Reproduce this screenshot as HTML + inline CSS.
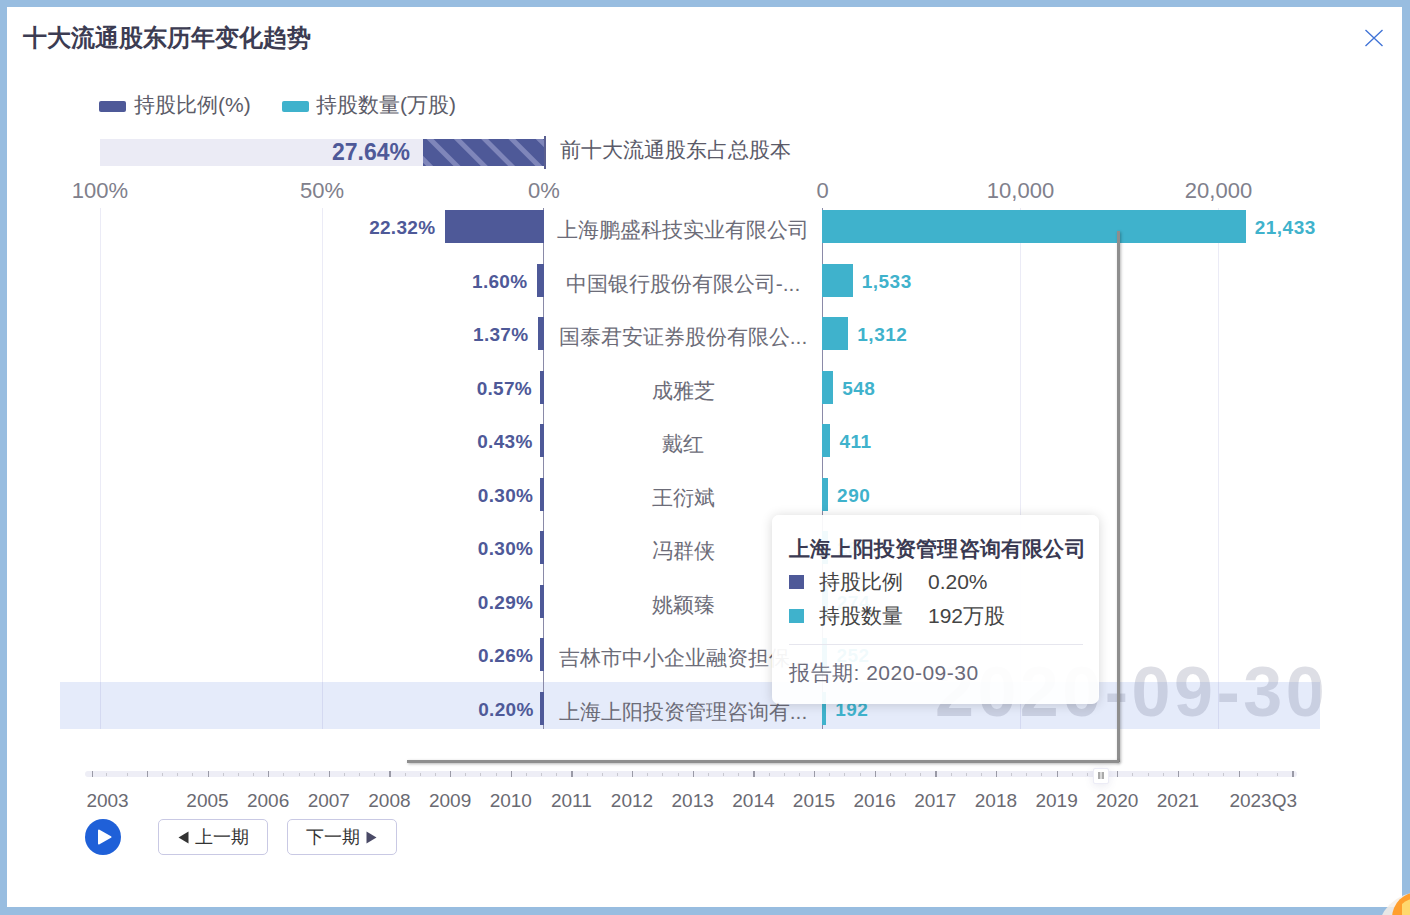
<!DOCTYPE html>
<html><head><meta charset="utf-8">
<style>
*{margin:0;padding:0;box-sizing:border-box}
html,body{width:1410px;height:915px;overflow:hidden;background:#98bde0;font-family:"Liberation Sans",sans-serif}
.a{position:absolute;white-space:nowrap}
#win{left:7px;top:7px;width:1395px;height:900px;background:#fff}
.title{left:23px;top:23px;font-size:24px;font-weight:bold;color:#3c3c52;line-height:30px}
.lg{font-size:21px;color:#5c5c68;line-height:24px}
.sw{height:11px;width:27px;border-radius:2px}
.pur{background:#4e5998}
.teal{background:#3fb2cc}
.ax{font-size:22px;color:#80808c;line-height:24px;text-align:center;width:120px}
.grid{width:1px;background:rgba(90,90,180,0.12)}
.pl{font-size:19px;font-weight:bold;color:#4e5998;line-height:22px;text-align:right;width:120px;letter-spacing:0.3px}
.tl{font-size:19px;font-weight:bold;color:#3fb2cc;line-height:22px;letter-spacing:0.5px}
.cat{font-size:21px;color:#6c6c78;line-height:26px;text-align:center;width:278px;left:544px}
.yr{font-size:19px;color:#6a6a72;line-height:22px;text-align:center;width:60px}
.tick{width:1px;background:#999}
.btn{border:1px solid #c9c9e4;border-radius:5px;height:36px;width:110px;background:#fff;font-size:18px;color:#333;line-height:34px}
</style></head><body>
<div class="a" id="win"></div>
<div class="a title">十大流通股东历年变化趋势</div>
<svg class="a" style="left:1364px;top:29px" width="20" height="18" viewBox="0 0 20 18"><path d="M1.5 1 L18.5 17 M18.5 1 L1.5 17" stroke="#3f72d6" stroke-width="1.35" fill="none"/></svg>

<div class="a sw pur" style="left:99px;top:101px"></div><div class="a lg" style="left:134px;top:93px">持股比例(%)</div>
<div class="a sw teal" style="left:282px;top:101px"></div><div class="a lg" style="left:316px;top:93px">持股数量(万股)</div>
<div class="a" style="left:100px;top:139px;width:445px;height:27px;background:#ebebf5"></div>
<svg class="a" style="left:423px;top:139px" width="122" height="27"><rect width="122" height="27" fill="#4e5998"/><polygon points="140.0,0 147.0,0 174.0,27 167.0,27" fill="#7f86ba"/><polygon points="112.7,0 119.7,0 146.7,27 139.7,27" fill="#7f86ba"/><polygon points="85.4,0 92.4,0 119.4,27 112.4,27" fill="#7f86ba"/><polygon points="58.1,0 65.1,0 92.1,27 85.1,27" fill="#7f86ba"/><polygon points="30.8,0 37.8,0 64.8,27 57.8,27" fill="#7f86ba"/><polygon points="3.5,0 10.5,0 37.5,27 30.5,27" fill="#7f86ba"/><polygon points="-23.8,0 -16.8,0 10.2,27 3.2,27" fill="#7f86ba"/></svg>
<div class="a" style="left:544px;top:136px;width:1.5px;height:33px;background:#5a5f90"></div>
<div class="a" style="left:290px;top:138px;width:120px;text-align:right;font-size:23px;font-weight:bold;color:#4e5998;line-height:28px">27.64%</div>
<div class="a" style="left:560px;top:137px;font-size:21px;color:#5a5a68;line-height:26px">前十大流通股东占总股本</div>
<div class="a ax" style="left:40px;top:179px">100%</div>
<div class="a ax" style="left:262px;top:179px">50%</div>
<div class="a ax" style="left:484px;top:179px">0%</div>
<div class="a ax" style="left:762.5px;top:179px">0</div>
<div class="a ax" style="left:960.5px;top:179px">10,000</div>
<div class="a ax" style="left:1158.5px;top:179px">20,000</div>
<div class="a" style="left:60px;top:682px;width:1260px;height:47px;background:#e5ebfa"></div>
<div class="a grid" style="left:100px;top:208px;height:521px"></div>
<div class="a grid" style="left:322px;top:208px;height:521px"></div>
<div class="a grid" style="left:1020px;top:208px;height:521px"></div>
<div class="a grid" style="left:1218px;top:208px;height:521px"></div>
<div class="a" style="left:935px;top:652px;font-size:70px;font-weight:bold;letter-spacing:3.5px;color:rgba(120,125,150,0.25);line-height:80px">2020-09-30</div>
<div class="a" style="left:543px;top:208px;width:1px;height:521px;background:#8a8aa8"></div>
<div class="a" style="left:822px;top:208px;width:1px;height:521px;background:#8a8aa8"></div>
<div class="a pur" style="left:444.9px;top:210.2px;width:99.1px;height:33px;"></div>
<div class="a pl" style="left:315.4px;top:217.2px">22.32%</div>
<div class="a teal" style="left:822.4px;top:210.2px;width:423.3px;height:33px;"></div>
<div class="a tl" style="left:1254.7px;top:217.2px">21,433</div>
<div class="a cat" style="top:217.2px">上海鹏盛科技实业有限公司</div>
<div class="a pur" style="left:536.9px;top:263.7px;width:7.1px;height:33px;"></div>
<div class="a pl" style="left:407.4px;top:270.7px">1.60%</div>
<div class="a teal" style="left:822.4px;top:263.7px;width:30.3px;height:33px;"></div>
<div class="a tl" style="left:861.7px;top:270.7px">1,533</div>
<div class="a cat" style="top:270.7px">中国银行股份有限公司-...</div>
<div class="a pur" style="left:537.9px;top:317.2px;width:6.1px;height:33px;"></div>
<div class="a pl" style="left:408.4px;top:324.2px">1.37%</div>
<div class="a teal" style="left:822.4px;top:317.2px;width:25.9px;height:33px;"></div>
<div class="a tl" style="left:857.3px;top:324.2px">1,312</div>
<div class="a cat" style="top:324.2px">国泰君安证券股份有限公...</div>
<div class="a pur" style="left:540.0px;top:370.7px;width:4.0px;height:33px;"></div>
<div class="a pl" style="left:412.0px;top:377.7px">0.57%</div>
<div class="a teal" style="left:822.4px;top:370.7px;width:10.8px;height:33px;"></div>
<div class="a tl" style="left:842.2px;top:377.7px">548</div>
<div class="a cat" style="top:377.7px">成雅芝</div>
<div class="a pur" style="left:540.0px;top:424.2px;width:4.0px;height:33px;"></div>
<div class="a pl" style="left:412.6px;top:431.2px">0.43%</div>
<div class="a teal" style="left:822.4px;top:424.2px;width:8.1px;height:33px;"></div>
<div class="a tl" style="left:839.5px;top:431.2px">411</div>
<div class="a cat" style="top:431.2px">戴红</div>
<div class="a pur" style="left:540.0px;top:477.7px;width:4.0px;height:33px;"></div>
<div class="a pl" style="left:413.2px;top:484.7px">0.30%</div>
<div class="a teal" style="left:822.4px;top:477.7px;width:5.7px;height:33px;"></div>
<div class="a tl" style="left:837.1px;top:484.7px">290</div>
<div class="a cat" style="top:484.7px">王衍斌</div>
<div class="a pur" style="left:540.0px;top:531.2px;width:4.0px;height:33px;"></div>
<div class="a pl" style="left:413.2px;top:538.2px">0.30%</div>
<div class="a teal" style="left:822.4px;top:531.2px;width:5.6px;height:33px;"></div>
<div class="a tl" style="left:837.0px;top:538.2px">285</div>
<div class="a cat" style="top:538.2px">冯群侠</div>
<div class="a pur" style="left:540.0px;top:584.7px;width:4.0px;height:33px;"></div>
<div class="a pl" style="left:413.2px;top:591.7px">0.29%</div>
<div class="a teal" style="left:822.4px;top:584.7px;width:5.4px;height:33px;"></div>
<div class="a tl" style="left:836.8px;top:591.7px">274</div>
<div class="a cat" style="top:591.7px">姚颖臻</div>
<div class="a pur" style="left:540.0px;top:638.2px;width:4.0px;height:33px;"></div>
<div class="a pl" style="left:413.3px;top:645.2px">0.26%</div>
<div class="a teal" style="left:822.4px;top:638.2px;width:5.0px;height:33px;"></div>
<div class="a tl" style="left:836.4px;top:645.2px">252</div>
<div class="a cat" style="top:645.2px">吉林市中小企业融资担保...</div>
<div class="a pur" style="left:540.0px;top:691.7px;width:4.0px;height:33px;"></div>
<div class="a pl" style="left:413.6px;top:698.7px">0.20%</div>
<div class="a teal" style="left:822.4px;top:691.7px;width:3.8px;height:33px;"></div>
<div class="a tl" style="left:835.2px;top:698.7px">192</div>
<div class="a cat" style="top:698.7px">上海上阳投资管理咨询有...</div>
<div class="a" style="left:1117px;top:231px;width:2.5px;height:531px;background:#8e8e8e;box-shadow:1px 1px 3px rgba(0,0,0,0.3)"></div>
<div class="a" style="left:407px;top:760px;width:712px;height:2.5px;background:#8e8e8e;box-shadow:1px 1px 3px rgba(0,0,0,0.3)"></div>
<div class="a" style="left:772px;top:515px;width:327px;height:189px;background:rgba(255,255,255,0.93);border-radius:7px;box-shadow:0 1px 12px rgba(0,0,0,0.16)"></div>
<div class="a" style="left:789px;top:536px;font-size:21px;font-weight:bold;letter-spacing:0.2px;color:#3a3a52;line-height:26px">上海上阳投资管理咨询有限公司</div>
<div class="a pur" style="left:789px;top:575px;width:15px;height:14px"></div>
<div class="a" style="left:819px;top:569px;font-size:21px;color:#444;line-height:26px">持股比例</div>
<div class="a" style="left:928px;top:569px;font-size:21px;color:#444;line-height:26px">0.20%</div>
<div class="a teal" style="left:789px;top:609px;width:15px;height:14px"></div>
<div class="a" style="left:819px;top:603px;font-size:21px;color:#444;line-height:26px">持股数量</div>
<div class="a" style="left:928px;top:603px;font-size:21px;color:#444;line-height:26px">192万股</div>
<div class="a" style="left:789px;top:644px;width:294px;height:1px;background:#e6e6ee"></div>
<div class="a" style="left:789px;top:660px;font-size:21px;letter-spacing:0.5px;color:#6a6a7a;line-height:26px">报告期: 2020-09-30</div>

<div class="a" style="left:85px;top:771px;width:1212px;height:6px;border-radius:3px;background:#eeeef6"></div>
<div class="a" style="left:92.0px;top:771px;width:1.3px;height:6px;background:#9a9aa6"></div>
<div class="a" style="left:106.4px;top:773px;width:1px;height:3px;background:#c8c8d0"></div>
<div class="a" style="left:126.6px;top:773px;width:1px;height:3px;background:#c8c8d0"></div>
<div class="a" style="left:146.5px;top:771px;width:1.3px;height:6px;background:#9a9aa6"></div>
<div class="a" style="left:161.8px;top:773px;width:1px;height:3px;background:#c8c8d0"></div>
<div class="a" style="left:177.0px;top:773px;width:1px;height:3px;background:#c8c8d0"></div>
<div class="a" style="left:192.2px;top:773px;width:1px;height:3px;background:#c8c8d0"></div>
<div class="a" style="left:207.5px;top:771px;width:1.3px;height:6px;background:#9a9aa6"></div>
<div class="a" style="left:222.7px;top:773px;width:1px;height:3px;background:#c8c8d0"></div>
<div class="a" style="left:237.8px;top:773px;width:1px;height:3px;background:#c8c8d0"></div>
<div class="a" style="left:253.0px;top:773px;width:1px;height:3px;background:#c8c8d0"></div>
<div class="a" style="left:268.1px;top:771px;width:1.3px;height:6px;background:#9a9aa6"></div>
<div class="a" style="left:283.3px;top:773px;width:1px;height:3px;background:#c8c8d0"></div>
<div class="a" style="left:298.5px;top:773px;width:1px;height:3px;background:#c8c8d0"></div>
<div class="a" style="left:313.6px;top:773px;width:1px;height:3px;background:#c8c8d0"></div>
<div class="a" style="left:328.8px;top:771px;width:1.3px;height:6px;background:#9a9aa6"></div>
<div class="a" style="left:344.0px;top:773px;width:1px;height:3px;background:#c8c8d0"></div>
<div class="a" style="left:359.1px;top:773px;width:1px;height:3px;background:#c8c8d0"></div>
<div class="a" style="left:374.3px;top:773px;width:1px;height:3px;background:#c8c8d0"></div>
<div class="a" style="left:389.4px;top:771px;width:1.3px;height:6px;background:#9a9aa6"></div>
<div class="a" style="left:404.6px;top:773px;width:1px;height:3px;background:#c8c8d0"></div>
<div class="a" style="left:419.8px;top:773px;width:1px;height:3px;background:#c8c8d0"></div>
<div class="a" style="left:434.9px;top:773px;width:1px;height:3px;background:#c8c8d0"></div>
<div class="a" style="left:450.1px;top:771px;width:1.3px;height:6px;background:#9a9aa6"></div>
<div class="a" style="left:465.3px;top:773px;width:1px;height:3px;background:#c8c8d0"></div>
<div class="a" style="left:480.4px;top:773px;width:1px;height:3px;background:#c8c8d0"></div>
<div class="a" style="left:495.6px;top:773px;width:1px;height:3px;background:#c8c8d0"></div>
<div class="a" style="left:510.8px;top:771px;width:1.3px;height:6px;background:#9a9aa6"></div>
<div class="a" style="left:525.9px;top:773px;width:1px;height:3px;background:#c8c8d0"></div>
<div class="a" style="left:541.1px;top:773px;width:1px;height:3px;background:#c8c8d0"></div>
<div class="a" style="left:556.2px;top:773px;width:1px;height:3px;background:#c8c8d0"></div>
<div class="a" style="left:571.4px;top:771px;width:1.3px;height:6px;background:#9a9aa6"></div>
<div class="a" style="left:586.6px;top:773px;width:1px;height:3px;background:#c8c8d0"></div>
<div class="a" style="left:601.7px;top:773px;width:1px;height:3px;background:#c8c8d0"></div>
<div class="a" style="left:616.9px;top:773px;width:1px;height:3px;background:#c8c8d0"></div>
<div class="a" style="left:632.0px;top:771px;width:1.3px;height:6px;background:#9a9aa6"></div>
<div class="a" style="left:647.2px;top:773px;width:1px;height:3px;background:#c8c8d0"></div>
<div class="a" style="left:662.4px;top:773px;width:1px;height:3px;background:#c8c8d0"></div>
<div class="a" style="left:677.5px;top:773px;width:1px;height:3px;background:#c8c8d0"></div>
<div class="a" style="left:692.7px;top:771px;width:1.3px;height:6px;background:#9a9aa6"></div>
<div class="a" style="left:707.9px;top:773px;width:1px;height:3px;background:#c8c8d0"></div>
<div class="a" style="left:723.0px;top:773px;width:1px;height:3px;background:#c8c8d0"></div>
<div class="a" style="left:738.2px;top:773px;width:1px;height:3px;background:#c8c8d0"></div>
<div class="a" style="left:753.4px;top:771px;width:1.3px;height:6px;background:#9a9aa6"></div>
<div class="a" style="left:768.5px;top:773px;width:1px;height:3px;background:#c8c8d0"></div>
<div class="a" style="left:783.7px;top:773px;width:1px;height:3px;background:#c8c8d0"></div>
<div class="a" style="left:798.8px;top:773px;width:1px;height:3px;background:#c8c8d0"></div>
<div class="a" style="left:814.0px;top:771px;width:1.3px;height:6px;background:#9a9aa6"></div>
<div class="a" style="left:829.2px;top:773px;width:1px;height:3px;background:#c8c8d0"></div>
<div class="a" style="left:844.3px;top:773px;width:1px;height:3px;background:#c8c8d0"></div>
<div class="a" style="left:859.5px;top:773px;width:1px;height:3px;background:#c8c8d0"></div>
<div class="a" style="left:874.6px;top:771px;width:1.3px;height:6px;background:#9a9aa6"></div>
<div class="a" style="left:889.8px;top:773px;width:1px;height:3px;background:#c8c8d0"></div>
<div class="a" style="left:905.0px;top:773px;width:1px;height:3px;background:#c8c8d0"></div>
<div class="a" style="left:920.1px;top:773px;width:1px;height:3px;background:#c8c8d0"></div>
<div class="a" style="left:935.3px;top:771px;width:1.3px;height:6px;background:#9a9aa6"></div>
<div class="a" style="left:950.5px;top:773px;width:1px;height:3px;background:#c8c8d0"></div>
<div class="a" style="left:965.6px;top:773px;width:1px;height:3px;background:#c8c8d0"></div>
<div class="a" style="left:980.8px;top:773px;width:1px;height:3px;background:#c8c8d0"></div>
<div class="a" style="left:995.9px;top:771px;width:1.3px;height:6px;background:#9a9aa6"></div>
<div class="a" style="left:1011.1px;top:773px;width:1px;height:3px;background:#c8c8d0"></div>
<div class="a" style="left:1026.3px;top:773px;width:1px;height:3px;background:#c8c8d0"></div>
<div class="a" style="left:1041.4px;top:773px;width:1px;height:3px;background:#c8c8d0"></div>
<div class="a" style="left:1056.6px;top:771px;width:1.3px;height:6px;background:#9a9aa6"></div>
<div class="a" style="left:1071.8px;top:773px;width:1px;height:3px;background:#c8c8d0"></div>
<div class="a" style="left:1086.9px;top:773px;width:1px;height:3px;background:#c8c8d0"></div>
<div class="a" style="left:1102.1px;top:773px;width:1px;height:3px;background:#c8c8d0"></div>
<div class="a" style="left:1117.2px;top:771px;width:1.3px;height:6px;background:#9a9aa6"></div>
<div class="a" style="left:1132.4px;top:773px;width:1px;height:3px;background:#c8c8d0"></div>
<div class="a" style="left:1147.6px;top:773px;width:1px;height:3px;background:#c8c8d0"></div>
<div class="a" style="left:1162.7px;top:773px;width:1px;height:3px;background:#c8c8d0"></div>
<div class="a" style="left:1177.9px;top:771px;width:1.3px;height:6px;background:#9a9aa6"></div>
<div class="a" style="left:1193.1px;top:773px;width:1px;height:3px;background:#c8c8d0"></div>
<div class="a" style="left:1208.2px;top:773px;width:1px;height:3px;background:#c8c8d0"></div>
<div class="a" style="left:1223.4px;top:773px;width:1px;height:3px;background:#c8c8d0"></div>
<div class="a" style="left:1238.6px;top:771px;width:1.3px;height:6px;background:#9a9aa6"></div>
<div class="a" style="left:1257.3px;top:773px;width:1px;height:3px;background:#c8c8d0"></div>
<div class="a" style="left:1277.2px;top:773px;width:1px;height:3px;background:#c8c8d0"></div>
<div class="a" style="left:1292.4px;top:771px;width:1.3px;height:6px;background:#9a9aa6"></div>
<div class="a" style="left:1093px;top:768px;width:16px;height:16px;background:#fff;border:1.5px solid #ececf6;border-radius:2px;box-shadow:0 2px 8px rgba(80,80,140,0.12)"></div>
<div class="a" style="left:1098px;top:772px;width:6px;height:6.5px;background:#aaa"></div><div class="a" style="left:1100.3px;top:772px;width:1.4px;height:6.5px;background:#d8d8d8"></div>
<div class="a yr" style="left:86.4px;top:790px;text-align:left">2003</div>
<div class="a yr" style="left:177.5px;top:790px">2005</div>
<div class="a yr" style="left:238.1px;top:790px">2006</div>
<div class="a yr" style="left:298.8px;top:790px">2007</div>
<div class="a yr" style="left:359.4px;top:790px">2008</div>
<div class="a yr" style="left:420.1px;top:790px">2009</div>
<div class="a yr" style="left:480.8px;top:790px">2010</div>
<div class="a yr" style="left:541.4px;top:790px">2011</div>
<div class="a yr" style="left:602.0px;top:790px">2012</div>
<div class="a yr" style="left:662.7px;top:790px">2013</div>
<div class="a yr" style="left:723.4px;top:790px">2014</div>
<div class="a yr" style="left:784.0px;top:790px">2015</div>
<div class="a yr" style="left:844.6px;top:790px">2016</div>
<div class="a yr" style="left:905.3px;top:790px">2017</div>
<div class="a yr" style="left:965.9px;top:790px">2018</div>
<div class="a yr" style="left:1026.6px;top:790px">2019</div>
<div class="a yr" style="left:1087.2px;top:790px">2020</div>
<div class="a yr" style="left:1147.9px;top:790px">2021</div>
<div class="a yr" style="left:1197px;top:790px;width:100px;text-align:right">2023Q3</div>
<svg class="a" style="left:85px;top:819px" width="36" height="36" viewBox="0 0 36 36"><circle cx="18" cy="18" r="18" fill="#1f60d8"/><path d="M14 11.5 L25.5 18 L14 24.5 Z" fill="#fff" stroke="#fff" stroke-width="2" stroke-linejoin="round"/></svg>
<div class="a btn" style="left:158px;top:819px"></div>
<svg class="a" style="left:178px;top:831px" width="11" height="13" viewBox="0 0 11 13"><path d="M10.5 0.5 L0.5 6.5 L10.5 12.5 Z" fill="#333"/></svg>
<div class="a" style="left:195px;top:826px;font-size:18px;color:#333;line-height:22px">上一期</div>
<div class="a btn" style="left:287px;top:819px"></div>
<div class="a" style="left:306px;top:826px;font-size:18px;color:#333;line-height:22px">下一期</div>
<svg class="a" style="left:366px;top:831px" width="11" height="13" viewBox="0 0 11 13"><path d="M0.5 0.5 L10.5 6.5 L0.5 12.5 Z" fill="#4a4a66"/></svg>
<div class="a" style="left:1377px;top:892px;width:86px;height:86px;border-radius:50%;background:rgba(246,238,230,0.85)"></div>
<div class="a" style="left:1392px;top:892px;width:52px;height:52px;border-radius:50%;background:#ff9f2e"></div>
<div class="a" style="left:1394px;top:898px;width:48px;height:48px;border-radius:50%;background:#ffd86e;clip-path:inset(0 0 0 8px)"></div>
</body></html>
